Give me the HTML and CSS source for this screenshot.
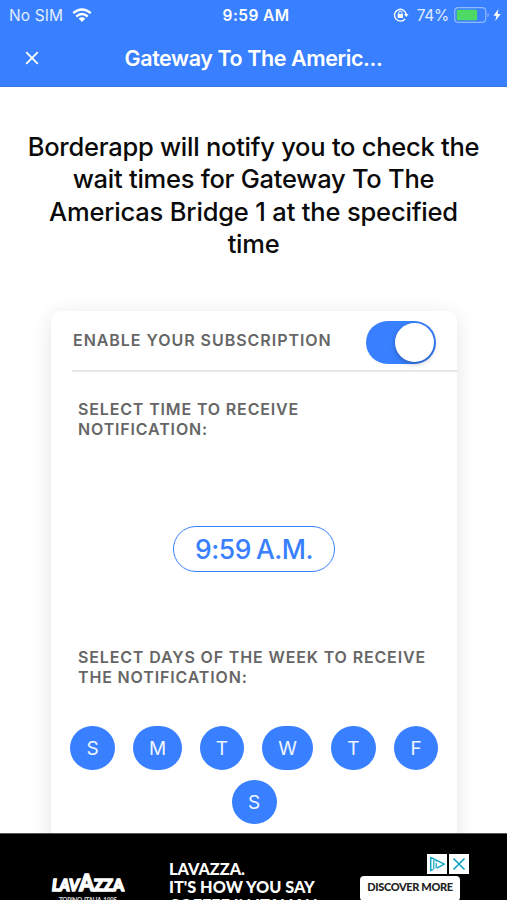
FILE: index.html
```html
<!DOCTYPE html>
<html lang="en">
<head>
<meta charset="utf-8">
<title>Borderapp</title>
<link rel="stylesheet" href="styles.css">
</head>
<body>
<div class="screen">
  <header class="header">
    <div class="status">
      <div class="status-left">
        <span class="carrier">No SIM</span>
        <svg class="wifi" width="20" height="15" viewBox="0 0 20 15"><g fill="none" stroke="#fff" stroke-width="2.4"><path d="M1.2 5.2Q10-2.4 18.8 5.2"/><path d="M4.3 8.5Q10 3.7 15.7 8.5"/></g><path d="M6.6 10.6Q10 7.7 13.4 10.6L10 14Z" fill="#fff"/></svg>
      </div>
      <span class="clock">9:59 AM</span>
      <div class="status-right">
        <svg width="16" height="14" viewBox="0 0 16 14"><path d="M12.1 10.8A5.9 5.9 0 1 1 13.2 6.2" fill="none" stroke="#fff" stroke-width="1.4"/><path d="M10.9 6H15.6L13.3 9Z" fill="#fff"/><rect x="4.6" y="6" width="5.4" height="4" rx=".5" fill="#fff"/><path d="M5.7 6V4.8a1.6 1.6 0 0 1 3.2 0V6" fill="none" stroke="#fff"/></svg>
        <span class="percent">74%</span>
        <svg class="battery" width="47" height="16" viewBox="0 0 47 16"><rect x=".7" y=".7" width="31" height="14.6" rx="3.5" fill="none" stroke="#8fb9ff" stroke-width="1.2"/><rect x="2.7" y="2.8" width="20.5" height="10.4" rx="1.3" fill="#4cd964"/><path d="M33.6 5.7q2 2.2 0 4.6z" fill="#a6c7ff"/><path d="M44.4 2.1L39.5 8.7h3L41.2 14l5.5-7.1h-3.1z" fill="#fff"/></svg>
      </div>
    </div>
    <div class="titlebar">
      <svg class="close" width="14" height="14" viewBox="0 0 14 14"><path d="M1.2 1.2L12.8 12.8M12.8 1.2L1.2 12.8" stroke="#fff" stroke-width="1.8"/></svg>
      <h1 class="title">Gateway To The Americ...</h1>
    </div>
  </header>
  <main class="content">
    <p class="message"><span>Borderapp will notify you to check the</span><span>wait times for Gateway To The</span><span class="third">Americas Bridge 1 at the specified</span><span>time</span></p>
    <section class="card">
      <div class="enable"><span class="enable-label">ENABLE YOUR SUBSCRIPTION</span><span class="toggle"><span class="knob"></span></span></div>
      <p class="label">SELECT TIME TO RECEIVE<br>NOTIFICATION:</p>
      <div class="time-row"><button class="time">9:59 A.M.</button></div>
      <p class="label days-label">SELECT DAYS OF THE WEEK TO RECEIVE<br>THE NOTIFICATION:</p>
      <div class="days">
        <button class="day">S</button><button class="day m">M</button><button class="day t">T</button><button class="day w">W</button><button class="day">T</button><button class="day t">F</button><button class="day">S</button>
      </div>
    </section>
  </main>
  <aside class="ad">
    <div class="brand">
      <svg width="74" height="20" viewBox="0 0 74 20"><text class="logo" x="1" y="18" textLength="72" lengthAdjust="spacingAndGlyphs"><tspan font-style="italic">LAV</tspan><tspan font-size="23">A</tspan>ZZA</text></svg>
      <span class="origin">TORINO, ITALIA, 1895</span>
    </div>
    <p class="slogan"><span>LAVAZZA.</span><span>IT'S HOW YOU SAY</span><span>COFFEE IN ITALIAN.</span></p>
    <div class="cta">DISCOVER MORE</div>
    <div class="adchoices">
      <svg width="20" height="20" viewBox="0 0 20 20"><path fill="#fff" d="M0 0h20v20H0z"/><path d="M6 15.6l-2.3 1V3.4L17.3 10.2L9.8 14.2" fill="none" stroke="#12a5c4" stroke-width="1.5" stroke-linejoin="round"/><path d="M6.8 6v9.5M9.2 9v5.2M9.2 6.4v1.3" fill="none" stroke="#12a5c4" stroke-width="1.2"/></svg>
      <svg width="20" height="20" viewBox="0 0 20 20"><path fill="#fff" d="M0 0h20v20H0z"/><path d="M4.5 4.5l11 11M15.5 4.5l-11 11" stroke="#12a5c4" stroke-width="1.7"/></svg>
    </div>
  </aside>
</div>
</body>
</html>
```

FILE: styles.css
```css
* { box-sizing: border-box; }
body { margin: 0; background: #fff; font-family: Inter, "Liberation Sans", sans-serif; }
p, h1 { margin: 0; }
button { font-family: inherit; padding: 0; border: 0; }
svg { display: block; flex: none; }
span { white-space: nowrap; }
.screen { width: 507px; height: 900px; overflow: hidden; display: flex; flex-direction: column; }
.header { height: 87px; background: #3880ff; color: #fff; flex: none; border-bottom: 1px solid #3678e8; }
.status { height: 30px; display: grid; grid-template-columns: 1fr auto 1fr; align-items: center; padding: 0 6px 0 9px; }
.status-left, .status-right { display: flex; align-items: center; }
.status-right { justify-content: flex-end; }
.carrier { font-size: 15.5px; letter-spacing: .1px; color: #e2edff; }
.wifi { margin-left: 9px; }
.clock { font-size: 15.5px; font-weight: 600; letter-spacing: .4px; padding-left: 2px; }
.percent { font-size: 15.5px; color: #e2edff; margin: 0 5px 0 8px; letter-spacing: -.3px; }
.titlebar { height: 55px; display: grid; grid-template-columns: 100px 1fr 100px; align-items: center; }
.close { margin-left: 25px; }
.title { font-size: 21.5px; font-weight: 600; text-align: center; letter-spacing: -.42px; white-space: nowrap; }
.content { flex: 1; min-height: 0; overflow: hidden; padding-top: 44px; }
.message { color: #0a0a0a; font-size: 25.5px; font-weight: 500; line-height: 32.3px; letter-spacing: -.25px; height: 130px; display: flex; flex-direction: column; align-items: center; }
.third { letter-spacing: -.17px; }
.card { margin: 50px 50px 0 51px; height: 560px; background: #fff; border-radius: 10px; box-shadow: 0 4px 20px rgba(0,0,0,.11); color: #666; }
.enable { height: 61px; margin-left: 21px; border-bottom: 2px solid #e6e6e6; display: flex; justify-content: space-between; padding: 10px 21px 0 1px; }
.enable-label { font-size: 16px; font-weight: 600; line-height: 38px; letter-spacing: .96px; }
.toggle { width: 70px; height: 43px; border-radius: 22px; background: #3880ff; display: flex; justify-content: flex-end; padding: 2px 2px 0 0; }
.knob { width: 39px; height: 39px; border-radius: 50%; background: #fff; box-shadow: 0 2px 5px rgba(0,0,0,.28); }
.label { font-size: 16px; font-weight: 600; line-height: 20.3px; letter-spacing: .85px; padding: 27px 0 0 27px; white-space: nowrap; height: 68px; }
.time-row { height: 134px; padding-top: 86px; display: flex; justify-content: center; }
.time { width: 162px; height: 46px; border: 1.5px solid #3880ff; border-radius: 24px; background: #fff; color: #3880ff; font-size: 26.5px; font-weight: 500; letter-spacing: -.5px; word-spacing: -1.5px; }
.days-label { height: 152px; padding-top: 73px; }
.days { display: flex; flex-wrap: wrap; justify-content: center; gap: 10px 18px; padding: 0 10px; }
.day { width: 45px; height: 44px; border-radius: 22px; background: #3880ff; color: #f0f6ff; font-size: 19px; }
.m { width: 49px; }
.t { width: 44px; }
.w { width: 51px; }
.ad { position: relative; height: 67px; flex: none; background: #000; border-top: 1px solid #555; overflow: hidden; display: grid; grid-template-columns: 169px 191px 100px; color: #fff; font-family: Lato, sans-serif; font-weight: 900; }
.brand { padding: 39px 0 0 51px; }
.logo { font-family: Lato, sans-serif; font-weight: 900; font-size: 17px; fill: #fff; stroke: #fff; stroke-width: 1.6px; }
.origin { display: block; font-size: 6.5px; line-height: 8px; margin: 4px 0 0 8px; letter-spacing: -.45px; color: #ccc; }
.slogan { padding-top: 26px; font-size: 16.3px; line-height: 18px; }
.slogan span { display: block; }
.cta { margin-top: 42px; height: 25px; border-radius: 4px; background: #fff; color: #222; font-size: 11px; line-height: 22px; letter-spacing: -.35px; text-align: center; white-space: nowrap; }
.adchoices { position: absolute; left: 427px; top: 20px; display: flex; gap: 2px; }
```
